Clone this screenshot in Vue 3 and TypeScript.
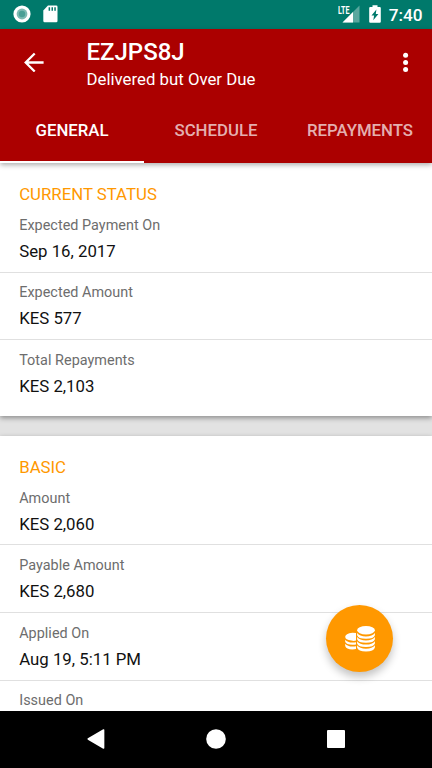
<script setup lang="ts">
import { ref } from 'vue'

interface Field {
  label: string
  value?: string
}

interface Section {
  title: string
  fields: Field[]
}

const tabs: string[] = ['General', 'Schedule', 'Repayments']
const activeTab = ref<number>(0)

const sections: Section[] = [
  {
    title: 'CURRENT STATUS',
    fields: [
      { label: 'Expected Payment On', value: 'Sep 16, 2017' },
      { label: 'Expected Amount', value: 'KES 577' },
      { label: 'Total Repayments', value: 'KES 2,103' },
    ],
  },
  {
    title: 'BASIC',
    fields: [
      { label: 'Amount', value: 'KES 2,060' },
      { label: 'Payable Amount', value: 'KES 2,680' },
      { label: 'Applied On', value: 'Aug 19, 5:11 PM' },
      { label: 'Issued On' },
    ],
  },
]
</script>

<template>
  <div class="screen">
    <div class="status-bar">
      <svg class="record" width="18" height="18" viewBox="0 0 18 18">
        <circle cx="9" cy="9" r="8.6" fill="#fff" />
        <circle cx="9" cy="9" r="5.4" fill="#7dbab2" />
        <circle cx="9" cy="9" r="3.2" fill="#4a9f95" />
      </svg>
      <svg class="sd" width="15" height="18" viewBox="0 0 15 18">
        <path fill="#fff" d="M5 .5h8.200q1.300 0 1.300 1.300v14q0 1.500-1.300 1.500H1.600q-1.300 0-1.300-1.500V5.600z" />
        <path fill="#00796b" d="M5.600 2.200h1.500v3.600H5.600zM8.500 2.200H10v3.600H8.500zM11.300 2.200h1.500v3.600h-1.500z" />
      </svg>
      <span class="spacer"></span>
      <div class="signal">
        <span class="lte">LTE</span>
        <svg width="18" height="18" viewBox="0 0 18 18">
          <path fill="#fff" fill-opacity=".35" d="M17.500.500v17H.500z" />
          <path fill="#fff" d="M11 7v10.500H.500z" />
        </svg>
      </div>
      <svg class="battery" width="12" height="18" viewBox="0 0 12 18">
        <path fill="#fff" d="M3.500.300h5v1.700h2.200q1.100 0 1.100.900v13.900q0 .900-1.100.900H1.300q-1.100 0-1.100-.900V2.900q0-.900 1.100-.900h2.200z" />
        <path fill="#00796b" d="M7.400 4.400 2.500 10.500h2.600l-.800 4.700 5.100-6.300H6.800z" />
      </svg>
      <span class="clock">7:40</span>
    </div>

    <header class="app-bar">
      <div class="toolbar">
        <svg class="back" width="20" height="20" viewBox="0 0 20 20" fill="none" stroke="#fff" stroke-width="2.300">
          <path d="M19.600 10.500H2M10.700 1.500 1.700 10.500l9 9" />
        </svg>
        <div class="titles">
          <h1>EZJPS8J</h1>
          <p>Delivered but Over Due</p>
        </div>
        <svg class="more" width="6" height="20" viewBox="0 0 6 20" fill="#fff">
          <circle cx="2.600" cy="3.200" r="2.500" />
          <circle cx="2.600" cy="10.400" r="2.500" />
          <circle cx="2.600" cy="17.400" r="2.500" />
        </svg>
      </div>
      <nav class="tabs">
        <button
          v-for="(tab, i) in tabs"
          :key="tab"
          :class="['tab', { active: i === activeTab }]"
          @click="activeTab = i"
        >{{ tab }}</button>
      </nav>
    </header>

    <main class="content">
      <section v-for="section in sections" :key="section.title" class="card">
        <h2>{{ section.title }}</h2>
        <div v-for="field in section.fields" :key="field.label" class="field">
          <div class="label">{{ field.label }}</div>
          <div v-if="field.value" class="value">{{ field.value }}</div>
        </div>
      </section>
      <button class="fab" aria-label="Repay">
        <svg width="32" height="28" viewBox="0 0 32 28" fill="#fff">
          <ellipse cx="22" cy="5.200" rx="8.900" ry="4.200" />
          <path d="M13.100 8q2.500 3.400 8.900 3.400T30.900 8v2.200q-1 3.500-8.900 3.500t-8.900-3.500z" />
          <path d="M13.100 12.100q2.500 3.400 8.900 3.400t8.900-3.400v2.200q-1 3.500-8.900 3.500t-8.900-3.500z" />
          <path d="M13.100 16.200q2.500 3.400 8.900 3.400t8.900-3.400v2.200q-1 3.500-8.900 3.500t-8.900-3.500z" />
          <path d="M13.100 20.300q2.500 3.400 8.900 3.400t8.900-3.400v2.200q-1 3.900-8.900 3.900t-8.900-3.900z" />
          <path d="M12 8.100v7.500q-2.200.600-4.600 0Q1.200 15 1.200 11.800T8.500 7.700q2 0 3.500.400z" />
          <path d="M1.200 14.700q2.300 2.800 7.300 2.800 2 0 3.500-.300v2.300q-1.500.300-3.500.300-6.400 0-7.300-3z" />
          <path d="M1.200 18.700q2.300 2.800 7.300 2.800 2 0 3.500-.300v2.900q-1.500.300-3.500.300-6.400 0-7.300-3.400z" />
        </svg>
      </button>
    </main>

    <div class="nav-bar">
      <svg width="20" height="22" viewBox="0 0 20 22">
        <path fill="#fff" stroke="#fff" stroke-width="1.500" stroke-linejoin="round" d="M17.600 2v18L2.200 11z" />
      </svg>
      <svg width="20" height="20" viewBox="0 0 20 20"><circle cx="10" cy="10" r="9.800" fill="#fff" /></svg>
      <svg width="20" height="20" viewBox="0 0 20 20"><rect x="1" y="1" width="18" height="18" rx="1" fill="#fff" /></svg>
    </div>
  </div>
</template>

<style>
body {
  margin: 0;
  overflow: hidden;
}
</style>

<style scoped>
.screen {
  display: flex;
  flex-direction: column;
  width: 432px;
  height: 768px;
  overflow: hidden;
  background: #e2e2e2;
  font-family: Roboto, "Liberation Sans", sans-serif;
}

.status-bar {
  display: flex;
  align-items: center;
  flex: none;
  box-sizing: border-box;
  height: 28.500px;
  padding: 0 9.500px 0 12.500px;
  background: #00796b;
  color: #fff;
}

.sd {
  margin-left: 12.500px;
}

.spacer {
  flex: 1;
}

.signal {
  position: relative;
  display: flex;
}

.lte {
  position: absolute;
  top: 0;
  left: -4px;
  font-size: 10.500px;
  font-weight: 700;
  line-height: 11px;
  transform: scaleX(.68);
  transform-origin: 0 0;
}

.battery {
  margin-left: 9px;
}

.clock {
  margin-left: 8px;
  font-size: 17.200px;
  font-weight: 500;
  line-height: 20px;
  padding-top: 1px;
}

.app-bar {
  position: relative;
  z-index: 1;
  flex: none;
  height: 134.500px;
  background: #ab0000;
  color: #fff;
  box-shadow: 0 2px 5px rgba(0, 0, 0, .32);
}

.toolbar {
  display: flex;
  align-items: center;
  height: 67.500px;
  padding: 0 23.500px 0 24px;
}

.titles {
  flex: 1;
  margin-left: 42.500px;
  padding-top: 8px;
}

h1 {
  margin: 0;
  font-size: 24px;
  font-weight: 500;
  line-height: 27px;
}

p {
  margin: 0;
  font-size: 16.800px;
  line-height: 27px;
}

.tabs {
  display: grid;
  grid-template-columns: repeat(3, 1fr);
  height: 67px;
}

.tab {
  padding: 3px 0 0;
  border: 0;
  border-bottom: 2.500px solid transparent;
  background: none;
  color: rgba(255, 255, 255, .7);
  font-family: inherit;
  font-size: 16.800px;
  font-weight: 500;
  text-transform: uppercase;
}

.tab.active {
  border-bottom-color: #fff;
  color: #fff;
}

.content {
  position: relative;
  display: flex;
  flex-direction: column;
  gap: 19.400px;
  flex: 1;
  min-height: 0;
  overflow: hidden;
}

.card {
  flex: none;
  padding: 21px 0 8.600px;
  background: #fff;
  box-shadow: 0 2px 5px rgba(0, 0, 0, .38);
}

h2 {
  margin: 0;
  padding-left: 19.200px;
  color: #ff9800;
  font-size: 16.800px;
  font-weight: 400;
  line-height: 20px;
}

.field {
  box-sizing: border-box;
  height: 67.600px;
  padding: 11.800px 19.200px 0;
  border-bottom: 1px solid #e0e0e0;
}

h2 + .field {
  height: 68.600px;
  padding-top: 13px;
}

.field:last-child {
  border-bottom: 0;
}

.label {
  color: #6d6d6d;
  font-size: 14.400px;
  line-height: 17px;
  letter-spacing: .03px;
}

.value {
  margin-top: 7px;
  color: #111;
  font-size: 16.800px;
  line-height: 20px;
}

.fab {
  position: absolute;
  right: 38.700px;
  bottom: 38.500px;
  display: flex;
  align-items: center;
  justify-content: center;
  width: 67px;
  height: 67px;
  padding: 0;
  border: 0;
  border-radius: 50%;
  background: #ff9800;
  box-shadow: 0 5px 9px rgba(0, 0, 0, .24);
}

.nav-bar {
  display: flex;
  align-items: center;
  justify-content: space-between;
  flex: none;
  box-sizing: border-box;
  height: 57.500px;
  padding: 0 86px;
  background: #000;
}
</style>
